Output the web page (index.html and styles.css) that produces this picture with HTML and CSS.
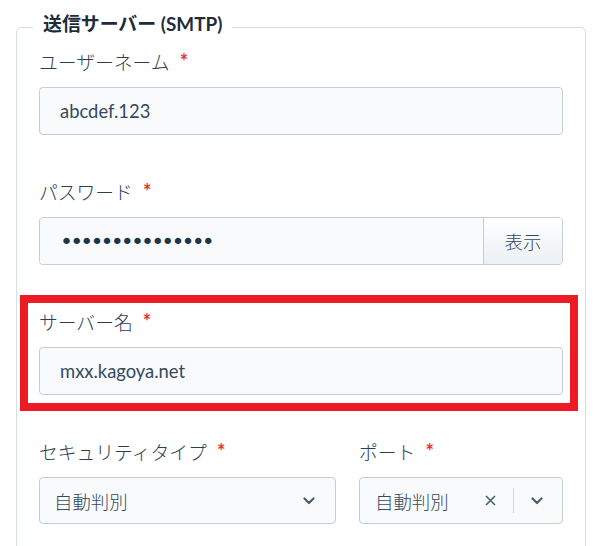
FILE: index.html
```html
<!DOCTYPE html>
<html lang="ja">
<head>
<meta charset="utf-8">
<title>送信サーバー (SMTP)</title>
<link rel="stylesheet" href="styles.css">
</head>
<body>
<form class="page">
  <fieldset class="panel">
    <legend class="panel-title">送信サーバー (SMTP)</legend>
    <div class="fields">
      <div class="field">
        <label class="label">ユーザーネーム <span class="req">*</span></label>
        <input class="input" type="text" value="abcdef.123" readonly>
      </div>
      <div class="field">
        <label class="label">パスワード <span class="req">*</span></label>
        <div class="input-group">
          <div class="input pw">•••••••••••••••</div>
          <button type="button" class="addon">表示</button>
        </div>
      </div>
      <div class="field highlighted">
        <label class="label">サーバー名 <span class="req">*</span></label>
        <input class="input" type="text" value="mxx.kagoya.net" readonly>
        <span class="mark" aria-hidden="true"></span>
      </div>
      <div class="row">
        <div class="field">
          <label class="label">セキュリティタイプ <span class="req">*</span></label>
          <div class="select">
            <span class="select-value">自動判別</span>
            <svg class="chev" width="12" height="8" viewBox="0 0 12 8"><path d="M1.5 1.5 L6 6 L10.5 1.5" fill="none" stroke="#4b5d6d" stroke-width="2.2" stroke-linecap="round" stroke-linejoin="round"/></svg>
          </div>
        </div>
        <div class="field">
          <label class="label">ポート <span class="req">*</span></label>
          <div class="select port">
            <span class="select-value">自動判別</span>
            <svg class="clear" width="11" height="11" viewBox="0 0 11 11"><path d="M1 1 L10 10 M10 1 L1 10" fill="none" stroke="#4b5d6d" stroke-width="1.6"/></svg>
            <span class="sep"></span>
            <svg class="chev" width="12" height="8" viewBox="0 0 12 8"><path d="M1.5 1.5 L6 6 L10.5 1.5" fill="none" stroke="#4b5d6d" stroke-width="2.2" stroke-linecap="round" stroke-linejoin="round"/></svg>
          </div>
        </div>
      </div>
    </div>
  </fieldset>
</form>
</body>
</html>
```

FILE: styles.css
```css
html, body {
  margin: 0;
  padding: 0;
  background: #ffffff;
}
body {
  font-family: Lato, "Noto Sans CJK JP", sans-serif;
  color: #2c3e50;
  font-size: 18.4px;
}
.page {
  padding: 12px 0 0 16px;
}
.panel {
  box-sizing: border-box;
  width: 570px;
  margin: 0;
  padding: 8px 22px 30px 22px;
  border: 1px solid #d5dee5;
  border-radius: 5px;
}
.panel-title {
  margin-left: -6px;
  padding: 0 10px 6px 10px;
  line-height: 24px;
  font-size: 18.9px;
  font-weight: 700;
  color: #1f2d3a;
}
.fields {
  display: flex;
  flex-direction: column;
  gap: 45px;
}
.field {
  display: flex;
  flex-direction: column;
  position: relative;
}
.label {
  height: 26px;
  line-height: 26px;
  margin-bottom: 11px;
  color: #2c3e50;
  font-weight: 300;
  font-size: 18.8px;
}
.req {
  color: #e3342f;
  font-size: 20px;
  font-weight: 700;
  line-height: 0;
  margin-left: 5px;
  vertical-align: 1px;
}
.input {
  box-sizing: border-box;
  height: 48px;
  width: 100%;
  margin: 0;
  padding: 0 20px;
  border: 1px solid #c4ced7;
  border-radius: 4px;
  background: #f8fafc;
  font: inherit;
  color: #34495e;
  outline: none;
}
.input-group {
  display: flex;
  height: 48px;
  border: 1px solid #c4ced7;
  border-radius: 4px;
  box-sizing: border-box;
  overflow: hidden;
}
.input-group .input {
  border: 0;
  height: 100%;
  border-radius: 0;
  flex: 1;
}
.pw {
  display: flex;
  align-items: center;
  padding-left: 20px;
  font-family: "DejaVu Sans", sans-serif;
  font-size: 22px;
  letter-spacing: -2.85px;
  color: #1e3549;
}
.addon {
  width: 79px;
  margin: 0;
  padding: 0;
  border: 0;
  border-left: 1px solid #c4ced7;
  background: linear-gradient(#ffffff, #ebf0f3);
  font: inherit;
  font-weight: 300;
  color: #34495e;
}
.highlighted .mark {
  position: absolute;
  top: -15px;
  left: -19px;
  right: -15px;
  bottom: -16px;
  border: 8px solid #ed1c24;
  pointer-events: none;
}
.row {
  display: grid;
  grid-template-columns: 297px 1fr;
  column-gap: 23px;
}
.select {
  box-sizing: border-box;
  height: 47px;
  display: flex;
  align-items: center;
  padding: 0 20px 0 14px;
  border: 1px solid #c4ced7;
  border-radius: 4px;
  background: #f8fafc;
  color: #34495e;
  font-weight: 300;
}
.select-value {
  flex: 1;
}
.port {
  padding-left: 15px;
  padding-right: 19px;
}
.clear {
  margin-right: 17px;
}
.sep {
  width: 1px;
  height: 25px;
  background: #cdd6dd;
  margin-right: 17px;
}
```
